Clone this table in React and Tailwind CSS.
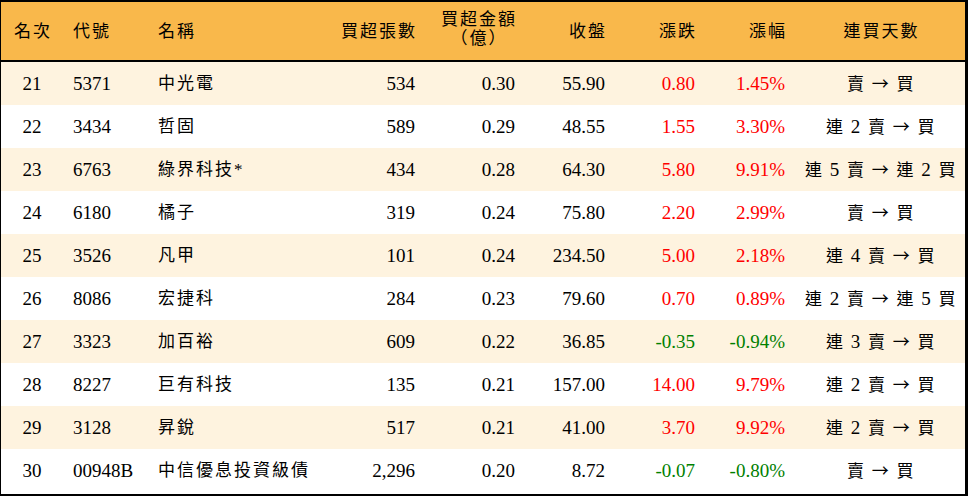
const rows = [
  ['21', '5371', '中光電', '534', '0.30', '55.90', '0.80', '1.45%', '賣 → 買'],
  ['22', '3434', '哲固', '589', '0.29', '48.55', '1.55', '3.30%', '連 2 賣 → 買'],
  ['23', '6763', '綠界科技*', '434', '0.28', '64.30', '5.80', '9.91%', '連 5 賣 → 連 2 買'],
  ['24', '6180', '橘子', '319', '0.24', '75.80', '2.20', '2.99%', '賣 → 買'],
  ['25', '3526', '凡甲', '101', '0.24', '234.50', '5.00', '2.18%', '連 4 賣 → 買'],
  ['26', '8086', '宏捷科', '284', '0.23', '79.60', '0.70', '0.89%', '連 2 賣 → 連 5 買'],
  ['27', '3323', '加百裕', '609', '0.22', '36.85', '-0.35', '-0.94%', '連 3 賣 → 買'],
  ['28', '8227', '巨有科技', '135', '0.21', '157.00', '14.00', '9.79%', '連 2 賣 → 買'],
  ['29', '3128', '昇銳', '517', '0.21', '41.00', '3.70', '9.92%', '連 2 賣 → 買'],
  ['30', '00948B', '中信優息投資級債', '2,296', '0.20', '8.72', '-0.07', '-0.80%', '賣 → 買'],
];

// CJK glyphs a bit smaller than the serif digits, like the original
const Streak = ({ text }) => (
  <span className="whitespace-pre tracking-[1.5px]">
    {text.split(' ').map((tok, i) => (
      <span key={i}>
        {i > 0 && ' '}
        {/\d/.test(tok) ? (
          tok
        ) : (
          <span className="text-[17px]" style={{ fontFamily: '"Noto Sans CJK TC", sans-serif' }}>
            {tok}
          </span>
        )}
      </span>
    ))}
  </span>
);

const App = () => {
  return (
    <div
      className="w-[968px] h-[496px] bg-white text-black border-l border-t-2 border-r-[3px] border-b-2 border-black text-[19px] leading-none"
      style={{ fontFamily: '"Liberation Serif", "Noto Sans CJK TC", serif' }}
    >
      <div className="h-[60px] flex items-center bg-[#f9b84b] border-b-2 border-black text-[17px] tracking-[2px]">
        <div className="w-[62px] text-center pl-[2px]">名次</div>
        <div className="w-[90px] pl-[10px]">代號</div>
        <div className="w-[177px] pl-[5px]">名稱</div>
        <div className="w-[100px] text-right pr-[13px]">買超張數</div>
        <div className="w-[100px] pr-[13px] flex justify-end">
          <div className="flex flex-col items-center leading-[19px] -mt-[4px]">
            <span>買超金額</span>
            <span>（億）</span>
          </div>
        </div>
        <div className="w-[90px] text-right pr-[13px]">收盤</div>
        <div className="w-[90px] text-right pr-[13px]">漲跌</div>
        <div className="w-[90px] text-right pr-[13px]">漲幅</div>
        <div className="flex-1 text-center pr-[2px]">連買天數</div>
      </div>
      {rows.map((r, i) => {
        const up = !r[6].startsWith('-');
        const tone = up ? 'text-[#ff0000]' : 'text-[#008000]';
        return (
          <div key={r[0]} className={`h-[43px] flex items-center ${i % 2 === 0 ? 'bg-[#fef3df]' : 'bg-white'}`}>
            <div className="w-[62px] text-center">{r[0]}</div>
            <div className="w-[90px] pl-[10px]">{r[1]}</div>
            <div className="w-[177px] pl-[5px] text-[17px] tracking-[2px]">{r[2]}</div>
            <div className="w-[100px] text-right pr-[15px]">{r[3]}</div>
            <div className="w-[100px] text-right pr-[15px]">{r[4]}</div>
            <div className="w-[90px] text-right pr-[15px]">{r[5]}</div>
            <div className={`w-[90px] text-right pr-[15px] ${tone}`}>{r[6]}</div>
            <div className={`w-[90px] text-right pr-[15px] ${tone}`}>{r[7]}</div>
            <div className="flex-1 text-center pr-[3px]">
              <Streak text={r[8]} />
            </div>
          </div>
        );
      })}
    </div>
  );
};

export default App;
